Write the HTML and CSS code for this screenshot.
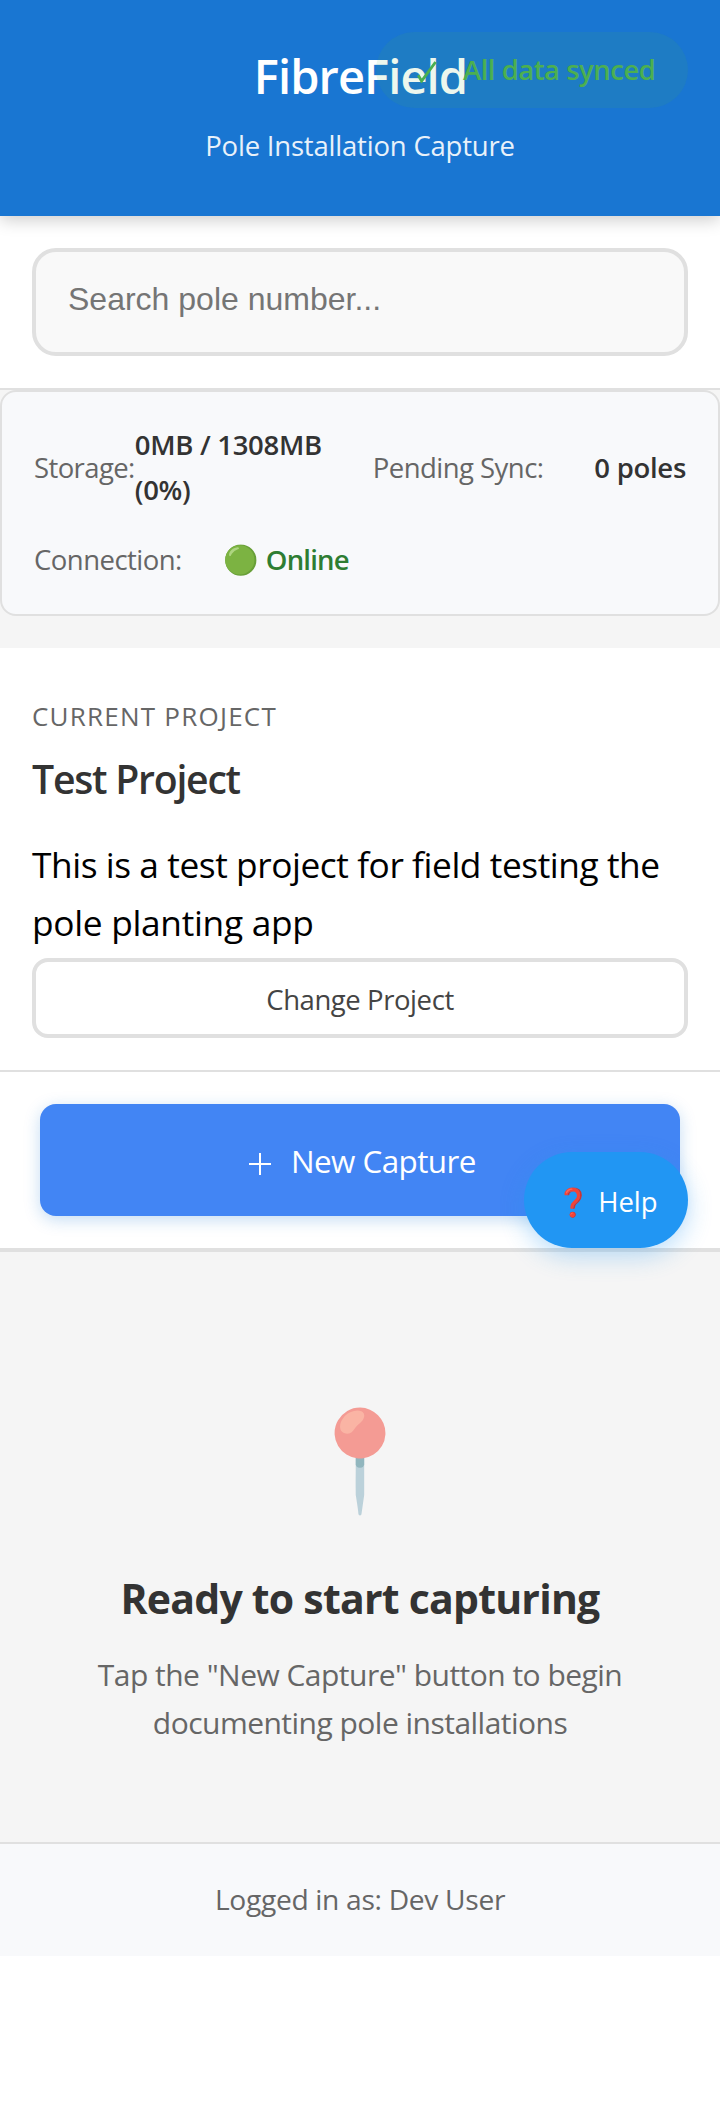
FILE: index.html
```html
<!DOCTYPE html>
<html lang="en">
<head>
<meta charset="utf-8">
<title>FibreField</title>
<link rel="stylesheet" href="styles.css">
</head>
<body>
<div class="app">
  <header class="header">
    <h1 class="title">FibreField</h1>
    <p class="subtitle">Pole Installation Capture</p>
    <div class="sync-badge">
      <svg class="check" viewBox="0 0 20 22" width="20" height="22"><path d="M1.2 14.2 L4.6 20 L18.6 1" fill="none" stroke="currentColor" stroke-width="2.9"/></svg>
      <span>All data synced</span>
    </div>
  </header>

  <section class="search">
    <input class="search-input" type="text" placeholder="Search pole number...">
  </section>

  <section class="status">
    <div class="status-item"><span class="label label-storage">Storage:</span><span class="value value-storage">0MB / 1308MB<br><span class="percent">(0%)</span></span></div>
    <div class="status-item"><span class="label label-sync">Pending Sync:</span><span class="value value-sync">0 poles</span></div>
    <div class="status-item"><span class="label">Connection:</span><span class="value value-online"><span class="dot">🟢</span> Online</span></div>
  </section>

  <section class="project">
    <div class="eyebrow">CURRENT PROJECT</div>
    <h2 class="project-name">Test Project</h2>
    <p class="project-text">This is a test project for field testing the <span class="project-tail">pole planting app</span></p>
    <button class="change">Change Project</button>
  </section>

  <section class="actions">
    <button class="capture">
      <svg class="plus" viewBox="0 0 22 22" width="22" height="22"><path d="M11 0V22M0 11H22" stroke="currentColor" stroke-width="2" fill="none"/></svg>
      <span>New Capture</span>
    </button>
    <button class="help">❓ Help</button>
  </section>

  <section class="empty">
    <div class="pin">📍</div>
    <h3 class="empty-title">Ready to start capturing</h3>
    <p class="empty-text">Tap the "New Capture" button to begin<br>documenting pole installations</p>
  </section>

  <footer class="footer">Logged in as: Dev User</footer>
</div>
</body>
</html>
```
FILE: styles.css
```css
* { box-sizing: border-box; }
body { margin: 0; background: #fff; font-family: "Open Sans", sans-serif; color: #000; }
h1, h2, h3, p { margin: 0; }
button { font-family: inherit; cursor: pointer; }

.app { background: #f5f5f5; }

.header { position: relative; z-index: 1; height: 216px; padding-top: 47px; background: #1976d2; color: #fff; text-align: center; box-shadow: 0 4px 16px rgba(0, 0, 0, .2); }
.title { padding-left: 1px; font-size: 47px; line-height: 58px; font-weight: 600; letter-spacing: -.9px; }
.subtitle { margin-top: 19px; font-size: 27.5px; line-height: 44px; letter-spacing: -.2px; opacity: .9; }
.sync-badge { position: absolute; top: 32px; right: 32px; display: flex; gap: 26px; width: 312px; height: 76px; padding-left: 41px; border-radius: 40px; background: rgba(76, 175, 80, .1); color: #4caf50; font-size: 27.5px; line-height: 75px; font-weight: 600; letter-spacing: -.5px; white-space: nowrap; }
.check { flex: none; margin-top: 29px; }

.search { height: 174px; padding: 32px; background: #fff; border-bottom: 2px solid #e0e0e0; }
.search-input { display: block; width: 100%; height: 108px; padding: 0 32px 5px 32px; border: 4px solid #e0e0e0; border-radius: 24px; background: #f9f9f9; font: 32px "Liberation Sans", Arial, sans-serif; }
.search-input::placeholder { color: #757575; }

.status { display: grid; grid-template-columns: 1fr 1fr; grid-template-rows: 90px 45px; gap: 25px 24px; height: 226px; padding: 31px 32px; border: 2px solid #e0e0e0; border-radius: 16px; background: #f8f9fb; font-size: 27.5px; line-height: 44.8px; white-space: nowrap; }
.status-item { display: flex; align-items: center; justify-content: space-between; }
.label { color: #666; letter-spacing: -.53px; }
.label-storage { letter-spacing: -.6px; }
.value { color: #333; font-weight: 600; letter-spacing: -.29px; }
.value-storage { flex: 0 0 214px; }
.value-online { color: #2e7d32; letter-spacing: -.8px; }
.dot { margin-right: 2px; font-size: 28.5px; line-height: 1; }

.project { height: 424px; margin-top: 32px; padding: 47px 32px 32px; background: #fff; border-bottom: 2px solid #e0e0e0; }
.eyebrow { font-size: 26px; line-height: 42px; letter-spacing: 1.23px; color: #666; }
.project-name { margin-top: 14px; font-size: 39.2px; line-height: 56px; font-weight: 600; letter-spacing: -1.25px; color: #333; }
.project-text { margin-top: 29px; font-size: 35.3px; line-height: 57.6px; letter-spacing: -.44px; }
.project-tail { letter-spacing: -.31px; }
.change { display: block; width: 100%; height: 80px; margin-top: 7px; padding: 3px 0 0; border: 4px solid #e0e0e0; border-radius: 16px; background: #fff; color: #444; font-size: 27.5px; letter-spacing: -.43px; }

.actions { position: relative; height: 180px; padding: 32px 40px; background: #fff; border-bottom: 4px solid #e0e0e0; }
.capture { display: flex; align-items: center; gap: 20px; width: 100%; height: 112px; padding: 0 0 0 209px; border: 0; border-radius: 16px; background: #4285f4; color: #fff; font-size: 31.4px; letter-spacing: -.57px; box-shadow: 0 4px 16px rgba(25, 118, 210, .25); }
.plus { margin-top: 8px; }
.help { position: absolute; right: 32px; bottom: 0; width: 164px; height: 96px; padding: 2px 0 0 32px; border: 0; border-radius: 48px; background: #2196f3; color: #fff; font-size: 27.5px; text-align: left; white-space: nowrap; word-spacing: 1px; box-shadow: 0 8px 24px rgba(33, 150, 243, .3); }

.empty { height: 590px; padding-top: 127px; text-align: center; }
.pin { height: 156px; font-size: 98px; line-height: 156px; opacity: .5; }
.empty-title { margin-top: 35px; font-size: 41px; line-height: 56px; font-weight: 700; letter-spacing: -.78px; color: #333; }
.empty-text { margin-top: 25px; font-size: 30px; line-height: 48px; letter-spacing: -.52px; color: #666; }

.footer { height: 114px; padding-top: 32px; border-top: 2px solid #e0e0e0; background: #f8f9fb; color: #666; text-align: center; font-size: 28.2px; line-height: 46px; letter-spacing: -.32px; }
```
